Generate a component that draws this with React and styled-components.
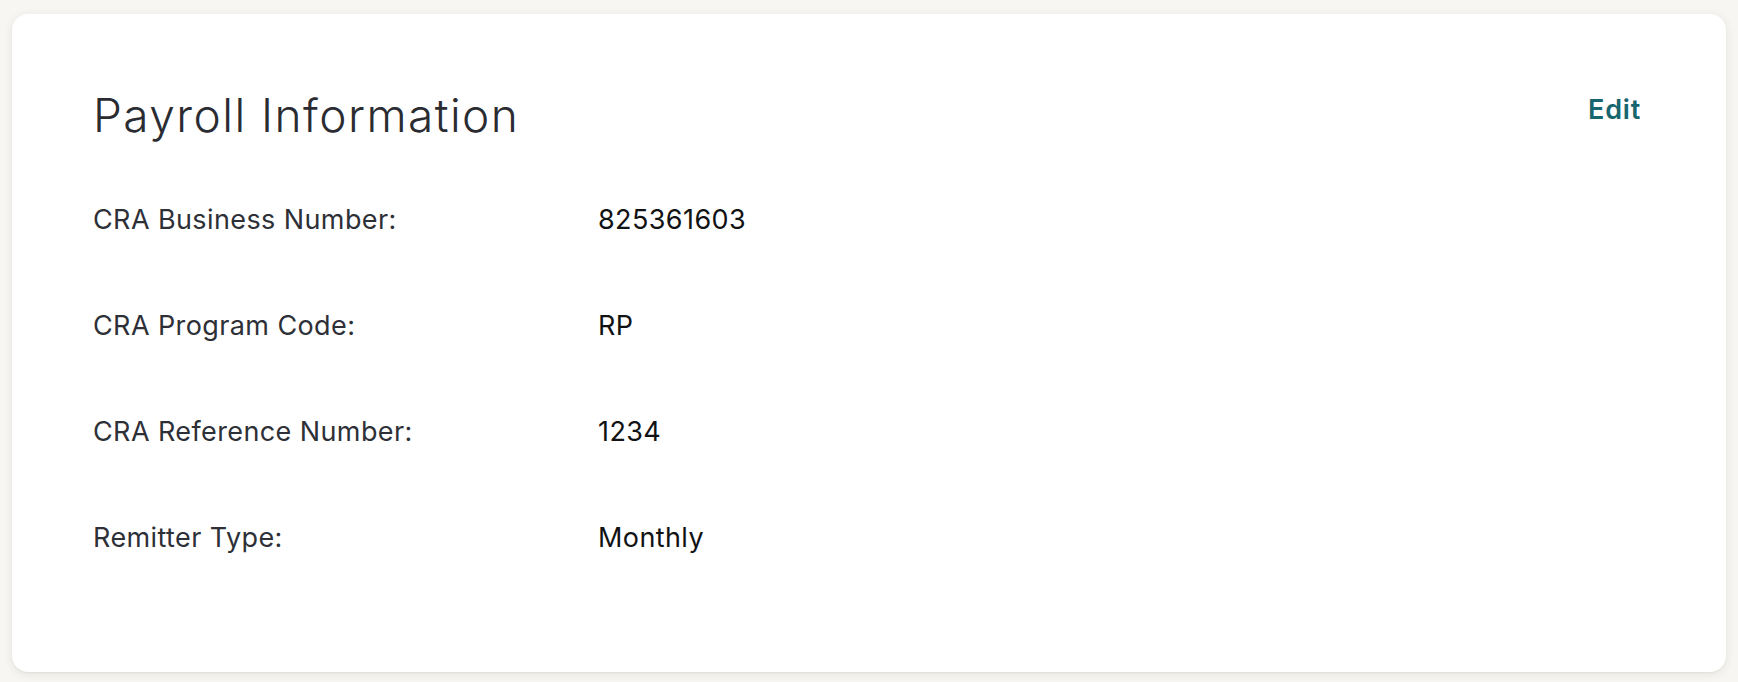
import styled, { createGlobalStyle } from "styled-components";

const GlobalStyle = createGlobalStyle`
  html, body {
    margin: 0;
    padding: 0;
    background: #f7f6f3;
  }
  body {
    font-family: Inter, "Noto Sans", "Liberation Sans", sans-serif;
    -webkit-font-smoothing: antialiased;
  }
`;

const fields = [
  { label: "CRA Business Number:", value: "825361603" },
  { label: "CRA Program Code:", value: "RP" },
  { label: "CRA Reference Number:", value: "1234" },
  { label: "Remitter Type:", value: "Monthly" },
];

function App() {
  return (
    <Page>
      <GlobalStyle />
      <Card>
        <Header>
          <Title>Payroll Information</Title>
          <EditButton type="button">Edit</EditButton>
        </Header>
        <Fields>
          {fields.map((f) => (
            <Row key={f.label}>
              <Label>{f.label}</Label>
              <Value>{f.value}</Value>
            </Row>
          ))}
        </Fields>
      </Card>
    </Page>
  );
}

const Page = styled.div`
  padding: 14px 12px 10px 12px;
`;

const Card = styled.section`
  background: #ffffff;
  border-radius: 16px;
  box-shadow: 0 2px 10px rgba(70, 60, 40, 0.1), 0 1px 2px rgba(70, 60, 40, 0.06);
  height: 658px;
  box-sizing: border-box;
  padding: 73px 85px 0 81px;
`;

const Header = styled.div`
  display: flex;
  justify-content: space-between;
  align-items: flex-start;
`;

const Title = styled.h2`
  margin: 0;
  font-size: 46px;
  line-height: 56px;
  font-weight: 300;
  color: #2a2c32;
  letter-spacing: 1.45px;
`;

const EditButton = styled.button`
  margin-top: 7px;
  padding: 0;
  border: none;
  background: none;
  font-family: inherit;
  font-size: 27px;
  line-height: 32px;
  font-weight: 600;
  letter-spacing: 0.8px;
  color: #17666e;
  cursor: pointer;
`;

const Fields = styled.div`
  display: flex;
  flex-direction: column;
  gap: 74px;
  margin-top: 61px;
`;

const Row = styled.div`
  display: grid;
  grid-template-columns: 505px 1fr;
  font-size: 27px;
  line-height: 32px;
  letter-spacing: 0.4px;
`;

const Label = styled.div`
  color: #2e3037;
`;

const Value = styled.div`
  color: #111214;
`;

export default App;
